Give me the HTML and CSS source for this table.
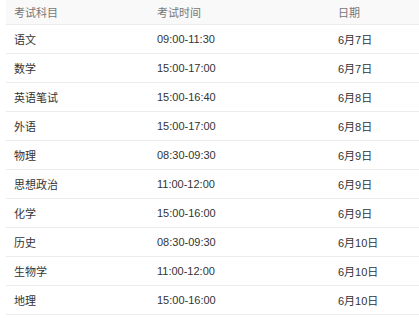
FILE: index.html
```html
<!DOCTYPE html>
<html lang="zh">
<head>
<meta charset="utf-8">
<link rel="stylesheet" href="styles.css">
</head>
<body>
<div class="table">
  <div class="row head"><div>考试科目</div><div>考试时间</div><div>日期</div></div>
  <div class="row"><div>语文</div><div>09:00-11:30</div><div>6月7日</div></div>
  <div class="row"><div>数学</div><div>15:00-17:00</div><div>6月7日</div></div>
  <div class="row"><div>英语笔试</div><div>15:00-16:40</div><div>6月8日</div></div>
  <div class="row"><div>外语</div><div>15:00-17:00</div><div>6月8日</div></div>
  <div class="row"><div>物理</div><div>08:30-09:30</div><div>6月9日</div></div>
  <div class="row"><div>思想政治</div><div>11:00-12:00</div><div>6月9日</div></div>
  <div class="row"><div>化学</div><div>15:00-16:00</div><div>6月9日</div></div>
  <div class="row"><div>历史</div><div>08:30-09:30</div><div>6月10日</div></div>
  <div class="row"><div>生物学</div><div>11:00-12:00</div><div>6月10日</div></div>
  <div class="row"><div>地理</div><div>15:00-16:00</div><div>6月10日</div></div>
</div>
</body>
</html>
```
FILE: styles.css
```css
html, body {
  margin: 0;
  padding: 0;
  background: #fff;
}
body {
  padding-left: 6px;
  font-family: "Liberation Sans", "Noto Sans CJK SC", sans-serif;
  font-size: 11px;
  color: #333;
}
.table {
  display: flex;
  flex-direction: column;
}
.row {
  display: grid;
  grid-template-columns: 143px 181px 1fr;
  height: 28px;
  align-items: center;
  border-bottom: 1px solid #ececec;
}
.row > div {
  padding-left: 8px;
}
.row.head {
  height: 24px;
  background: #f9f9f9;
  color: #777;
}
```
